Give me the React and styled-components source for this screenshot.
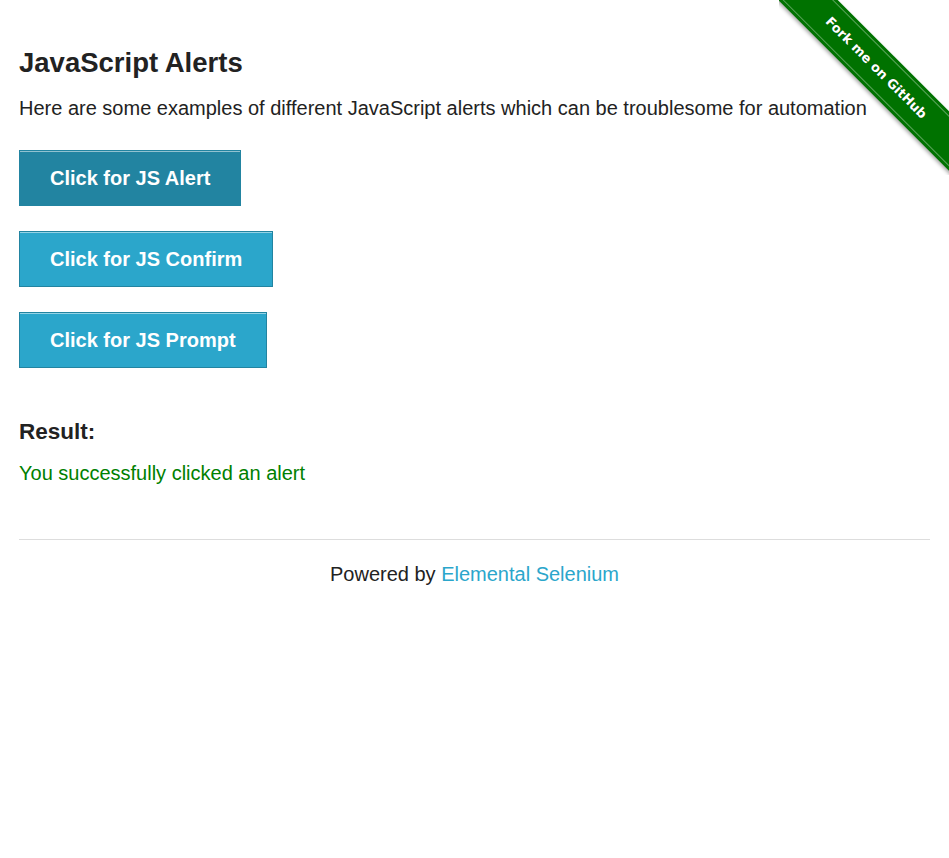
import React from 'react';
import styled, { createGlobalStyle } from 'styled-components';

const GlobalStyle = createGlobalStyle`
  html, body {
    margin: 0;
    padding: 0;
    background: #fff;
  }
  body {
    font-family: "Liberation Sans", Arial, Helvetica, sans-serif;
    color: #222;
  }
`;

const buttons = [
  { id: 1, label: 'Click for JS Alert', active: true },
  { id: 2, label: 'Click for JS Confirm' },
  { id: 3, label: 'Click for JS Prompt' },
];

const App = () => {
  return (
    <>
      <GlobalStyle />
      <Page>
        <Ribbon>
          <Band>Fork me on GitHub</Band>
        </Ribbon>
        <Content>
          <Title>JavaScript Alerts</Title>
          <Intro>Here are some examples of different JavaScript alerts which can be troublesome for automation</Intro>
          <ButtonList>
            {buttons.map((b) => (
              <li key={b.id}>
                <AlertButton active={b.active}>{b.label}</AlertButton>
              </li>
            ))}
          </ButtonList>
          <ResultTitle>Result:</ResultTitle>
          <ResultText>You successfully clicked an alert</ResultText>
        </Content>
        <Footer>
          <Rule />
          <FooterText>
            Powered by <FooterLink href="#">Elemental Selenium</FooterLink>
          </FooterText>
        </Footer>
      </Page>
    </>
  );
};

export default App;

const Page = styled.div`
  position: relative;
  min-height: 858px;
  padding: 47px 19px 0;
  box-sizing: border-box;
`;

const Ribbon = styled.div`
  position: absolute;
  top: 0;
  right: 0;
  width: 170px;
  height: 175px;
  overflow: hidden;
`;

const Band = styled.a`
  position: absolute;
  left: 97px;
  top: 68px;
  width: 270px;
  height: 42px;
  margin-left: -135px;
  margin-top: -21px;
  transform: rotate(45deg);
  background: #007200;
  box-shadow: -1px 2px 4px rgba(0, 0, 0, 0.35);
  color: #fff;
  font-family: "DejaVu Sans", "Liberation Sans", sans-serif;
  font-weight: bold;
  font-size: 13px;
  line-height: 42px;
  text-align: center;
  text-decoration: none;
  text-shadow: 0 0 1px rgba(0, 0, 0, 0.4);

  &::before,
  &::after {
    content: '';
    position: absolute;
    left: 0;
    right: 0;
    height: 1px;
    background: rgba(255, 255, 255, 0.35);
  }
  &::before {
    top: 3px;
  }
  &::after {
    bottom: 3px;
  }
`;

const Content = styled.div``;

const Title = styled.h3`
  margin: 0;
  font-size: 27.5px;
  line-height: 32px;
  font-weight: bold;
  color: #222;
`;

const Intro = styled.p`
  margin: 17px 0 0;
  font-size: 20px;
  line-height: 24px;
`;

const ButtonList = styled.ul`
  list-style: none;
  margin: 30px 0 0;
  padding: 0;
  display: flex;
  flex-direction: column;
  align-items: flex-start;
  gap: 25px;

  li {
    display: block;
  }
`;

const AlertButton = styled.button`
  display: block;
  height: 56px;
  box-sizing: border-box;
  padding: 0 30px;
  border: 1px solid #2284a1;
  background: ${(props) => (props.active ? '#2284a1' : '#2ba6cb')};
  box-shadow: inset 0 1px 0 rgba(255, 255, 255, 0.5);
  color: #fff;
  font-family: "Liberation Sans", Arial, sans-serif;
  font-weight: bold;
  font-size: 20px;
  cursor: pointer;
`;

const ResultTitle = styled.h4`
  margin: 50px 0 0;
  font-size: 22.5px;
  line-height: 28px;
  font-weight: bold;
`;

const ResultText = styled.p`
  margin: 15px 0 0;
  font-size: 20px;
  line-height: 24px;
  color: #008000;
`;

const Footer = styled.div`
  margin-top: 54px;
`;

const Rule = styled.hr`
  margin: 0;
  border: 0;
  border-top: 1px solid #ddd;
`;

const FooterText = styled.div`
  margin-top: 22px;
  text-align: center;
  font-size: 20px;
  line-height: 24px;
`;

const FooterLink = styled.a`
  color: #2ba6cb;
  text-decoration: none;
`;
